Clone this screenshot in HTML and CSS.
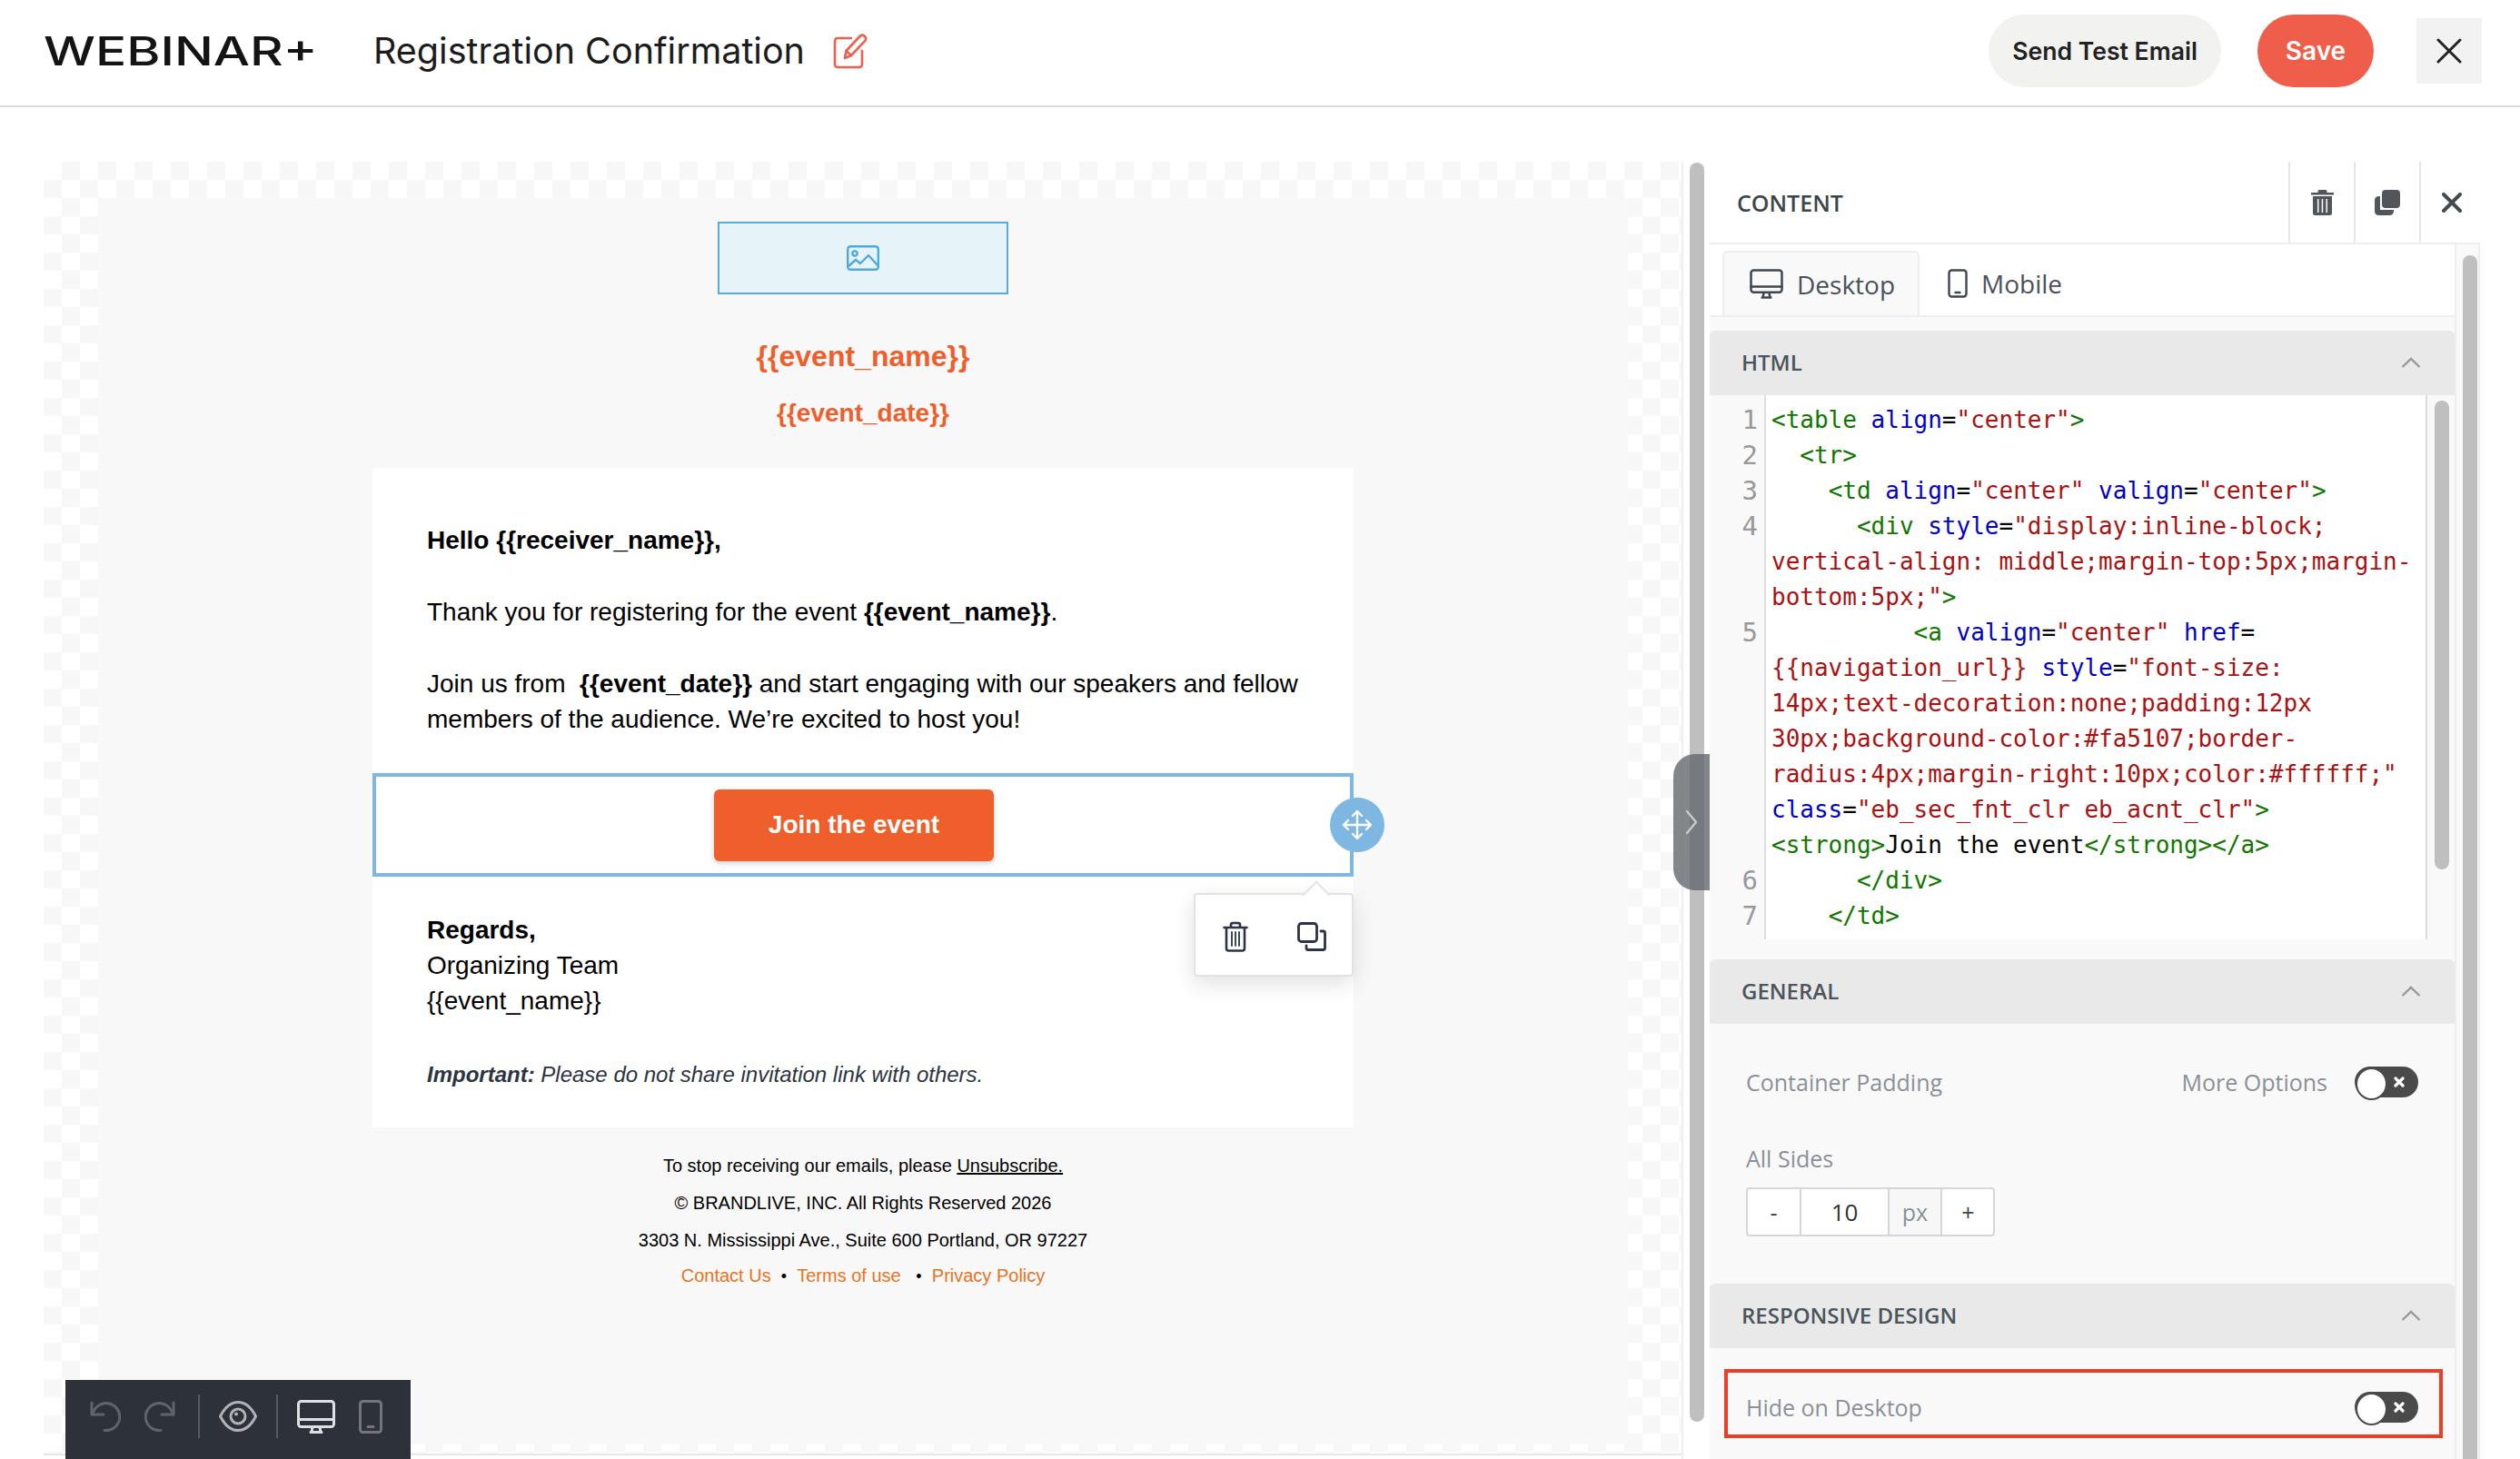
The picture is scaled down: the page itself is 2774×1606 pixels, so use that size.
FILE: index.html
```html
<!DOCTYPE html>
<html lang="en">
<head>
    <meta charset="UTF-8">
    <title>Registration Confirmation</title>
    <link rel="stylesheet" href="styles.css">
</head>
<body>
    <!-- Top bar -->
    <header class="topbar">
        <div class="logo"><span class="logo-text">WEBINAR+</span></div>
        <h1 class="page-title">Registration Confirmation</h1>
        <svg class="edit-icon" viewBox="0 0 38 40" fill="none" stroke="#ee5f4c" stroke-width="2.6" stroke-linejoin="round" stroke-linecap="round">
            <path d="M20 6H5a3 3 0 0 0-3 3v26a3 3 0 0 0 3 3h24a3 3 0 0 0 3-3V20"/>
            <path d="M13 28l1.5-8L30 3.5a3 3 0 0 1 4.300 0l1 1a3 3 0 0 1 0 4.300L20 25z"/>
            <path d="M14.500 20l5.500 5"/>
        </svg>
        <div class="topbar-actions">
            <button class="btn btn-test">Send Test Email</button>
            <button class="btn btn-save">Save</button>
            <button class="btn-close">
                <svg viewBox="0 0 28 28" width="28" height="28" stroke="#222" stroke-width="3" stroke-linecap="round"><path d="M2 2l24 24M26 2L2 26"/></svg>
            </button>
        </div>
    </header>

    <main class="workspace">
        <!-- Email canvas -->
        <section class="canvas">
            <div class="canvas-inner">
                <div class="email">
                    <div class="image-slot">
                        <svg viewBox="0 0 36 28" width="36" height="28" fill="none" stroke="#4fa9dc" stroke-width="2.400" stroke-linejoin="round">
                            <rect x="1.200" y="1.200" width="33.600" height="25.600" rx="3"/>
                            <circle cx="9" cy="9" r="2.600"/>
                            <path d="M2 23l8-7 5 4 9-9 10 11"/>
                        </svg>
                    </div>
                    <div class="event-name">{{event_name}}</div>
                    <div class="event-date">{{event_date}}</div>

                    <div class="card">
                        <p class="card-text"><strong>Hello {{receiver_name}},</strong></p>
                        <p class="card-text">Thank you for registering for the event <strong>{{event_name}}</strong>.</p>
                        <p class="card-text">Join us from&nbsp; <strong>{{event_date}}</strong> and start engaging with our speakers and fellow<br>members of the audience. We’re excited to host you!</p>

                        <div class="button-row">
                            <a class="join-btn">Join the event</a>
                            <span class="move-handle">
                                <svg viewBox="0 0 34 34" width="34" height="34" fill="none" stroke="#fff" stroke-width="2.400" stroke-linecap="round" stroke-linejoin="round">
                                    <path d="M17 2v30M2 17h30M12 7l5-5 5 5M12 27l5 5 5-5M7 12l-5 5 5 5M27 12l5 5-5 5"/>
                                </svg>
                            </span>
                            <div class="row-popup">
                                <svg viewBox="0 0 28 34" width="28" height="34" fill="none" stroke="#2b3445" stroke-width="2.600" stroke-linecap="round" stroke-linejoin="round">
                                    <path d="M1.500 7h25M9 7V4a2 2 0 0 1 2-2h6a2 2 0 0 1 2 2v3M4 7v23a2.500 2.500 0 0 0 2.500 2.500h15A2.500 2.500 0 0 0 24 30V7"/>
                                    <path d="M10 12v15M14 12v15M18 12v15" stroke-width="1.800"/>
                                </svg>
                                <svg viewBox="0 0 32 32" width="32" height="32" fill="none" stroke="#2b3445" stroke-width="2.800" stroke-linecap="round" stroke-linejoin="round">
                                    <rect x="1.500" y="1.500" width="20" height="20" rx="3"/>
                                    <path d="M26 10h2.500a2 2 0 0 1 2 2v16.500a2 2 0 0 1-2 2H12a2 2 0 0 1-2-2V26"/>
                                </svg>
                            </div>
                        </div>

                        <p class="card-text regards"><strong>Regards,</strong><br>Organizing Team<br>{{event_name}}</p>
                        <p class="important"><strong>Important:</strong> Please do not share invitation link with others.</p>
                    </div>

                    <footer class="email-footer">
                        <p class="footer-line">To stop receiving our emails, please <u>Unsubscribe.</u></p>
                        <p class="footer-line">© BRANDLIVE, INC. All Rights Reserved 2026</p>
                        <p class="footer-line">3303 N. Mississippi Ave., Suite 600 Portland, OR 97227</p>
                        <p class="footer-line footer-links"><a>Contact Us</a>&nbsp; <span class="dot">•</span> &nbsp;<a>Terms of use</a>&nbsp; &nbsp;<span class="dot">•</span> &nbsp;<a>Privacy Policy</a></p>
                    </footer>
                </div>
            </div>
        </section>

        <div class="canvas-scroll"><span class="canvas-thumb"></span></div>

        <!-- Settings panel -->
        <aside class="panel">
            <div class="panel-head">
                <span class="panel-title">CONTENT</span>
                <button class="panel-action">
                    <svg viewBox="0 0 25 28" width="25" height="28" fill="#50565b"><path d="M9 0h7a1.500 1.500 0 0 1 1.500 1.500V3H25v2.500H0V3h7.500V1.500A1.500 1.500 0 0 1 9 0z"/><path fill-rule="evenodd" d="M2 7h21v18.500a2.500 2.500 0 0 1-2.500 2.500h-16A2.500 2.500 0 0 1 2 25.500zM7 10v15h1.500V10zM11.700 10v15h1.500V10zM16.500 10v15H18V10z"/></svg>
                </button>
                <button class="panel-action">
                    <svg viewBox="0 0 28 28" width="28" height="28" fill="#50565b"><rect x="8" y="0" width="20" height="20" rx="4"/><path d="M6 7v15h15v1.500a4.500 4.500 0 0 1-4.500 4.500h-12A4.500 4.500 0 0 1 0 23.500v-12A4.500 4.500 0 0 1 4.500 7z"/></svg>
                </button>
                <button class="panel-action">
                    <svg viewBox="0 0 22 22" width="22" height="22" stroke="#444b50" stroke-width="4" stroke-linecap="round"><path d="M2 2l18 18M20 2L2 20"/></svg>
                </button>
            </div>
            <div class="panel-main">
                <div class="panel-body">
                    <div class="tabs">
                        <div class="tab tab-active">
                            <svg viewBox="0 0 38 34" width="37" height="33" fill="none" stroke="#3f474e" stroke-width="2.600" stroke-linejoin="round" stroke-linecap="round"><rect x="1.500" y="1.500" width="35" height="25" rx="3"/><path d="M1.500 20h35M14 32.500h10M16 27l-1 5M22 27l1 5"/></svg>
                            Desktop
                        </div>
                        <div class="tab">
                            <svg viewBox="0 0 22 32" width="22" height="32" fill="none" stroke="#3f474e" stroke-width="2.400" stroke-linejoin="round" stroke-linecap="round"><rect x="1.500" y="1.500" width="19" height="29" rx="3"/><path d="M8.500 26h5"/></svg>
                            Mobile
                        </div>
                    </div>

                    <div class="section-band">HTML<svg class="chevron" viewBox="0 0 22 12"><path d="M1.500 11L11 2l9.500 9"/></svg></div>
                    <div class="editor">
                        <div class="code-line"><span class="ln">1</span><span class="src"><span class="t">&lt;table</span> <span class="a">align</span>=<span class="s">"center"</span><span class="t">&gt;</span></span></div>
                        <div class="code-line"><span class="ln">2</span><span class="src">  <span class="t">&lt;tr&gt;</span></span></div>
                        <div class="code-line"><span class="ln">3</span><span class="src">    <span class="t">&lt;td</span> <span class="a">align</span>=<span class="s">"center"</span> <span class="a">valign</span>=<span class="s">"center"</span><span class="t">&gt;</span></span></div>
                        <div class="code-line"><span class="ln">4</span><span class="src">      <span class="t">&lt;div</span> <span class="a">style</span>=<span class="s">"display:inline-block;</span></span></div>
                        <div class="code-line"><span class="ln"></span><span class="src"><span class="s">vertical-align: middle;margin-top:5px;margin-</span></span></div>
                        <div class="code-line"><span class="ln"></span><span class="src"><span class="s">bottom:5px;"</span><span class="t">&gt;</span></span></div>
                        <div class="code-line"><span class="ln">5</span><span class="src">          <span class="t">&lt;a</span> <span class="a">valign</span>=<span class="s">"center"</span> <span class="a">href</span>=</span></div>
                        <div class="code-line"><span class="ln"></span><span class="src"><span class="s">{{navigation_url}}</span> <span class="a">style</span>=<span class="s">"font-size:</span></span></div>
                        <div class="code-line"><span class="ln"></span><span class="src"><span class="s">14px;text-decoration:none;padding:12px</span></span></div>
                        <div class="code-line"><span class="ln"></span><span class="src"><span class="s">30px;background-color:#fa5107;border-</span></span></div>
                        <div class="code-line"><span class="ln"></span><span class="src"><span class="s">radius:4px;margin-right:10px;color:#ffffff;"</span></span></div>
                        <div class="code-line"><span class="ln"></span><span class="src"><span class="a">class</span>=<span class="s">"eb_sec_fnt_clr eb_acnt_clr"</span><span class="t">&gt;</span></span></div>
                        <div class="code-line"><span class="ln"></span><span class="src"><span class="t">&lt;strong&gt;</span>Join the event<span class="t">&lt;/strong&gt;&lt;/a&gt;</span></span></div>
                        <div class="code-line"><span class="ln">6</span><span class="src">      <span class="t">&lt;/div&gt;</span></span></div>
                        <div class="code-line"><span class="ln">7</span><span class="src">    <span class="t">&lt;/td&gt;</span></span></div>
                        <span class="editor-thumb"></span>
                    </div>

                    <div class="section-band band-general">GENERAL<svg class="chevron" viewBox="0 0 22 12"><path d="M1.500 11L11 2l9.500 9"/></svg></div>
                    <div class="general">
                        <div class="field-row">
                            <span class="field-label">Container Padding</span>
                            <span class="more-options">
                                <span class="field-label">More Options</span>
                                <span class="toggle"><svg viewBox="0 0 12 12" width="12" height="12" stroke="#fff" stroke-width="3.200" stroke-linecap="round"><path d="M2 2l8 8M10 2l-8 8"/></svg></span>
                            </span>
                        </div>
                        <div class="field-label sides-label">All Sides</div>
                        <div class="stepper">
                            <span class="step">-</span>
                            <span class="step-value">10</span>
                            <span class="step-unit">px</span>
                            <span class="step">+</span>
                        </div>
                    </div>

                    <div class="section-band">RESPONSIVE DESIGN<svg class="chevron" viewBox="0 0 22 12"><path d="M1.500 11L11 2l9.500 9"/></svg></div>
                    <div class="hide-box">
                        <span class="field-label">Hide on Desktop</span>
                        <span class="toggle"><svg viewBox="0 0 12 12" width="12" height="12" stroke="#fff" stroke-width="3.200" stroke-linecap="round"><path d="M2 2l8 8M10 2l-8 8"/></svg></span>
                    </div>
                </div>
                <div class="panel-scroll"><span class="panel-thumb"></span></div>
            </div>
        </aside>

        <!-- Items sitting over the canvas -->
        <div class="collapse-handle">
            <svg viewBox="0 0 14 28" width="14" height="28" fill="none" stroke="#c9cbcd" stroke-width="2.400" stroke-linecap="round" stroke-linejoin="round"><path d="M2 2l10 12L2 26"/></svg>
        </div>
        <div class="toolbar">
            <svg class="tool" viewBox="0 0 34 34" width="34" height="34" fill="none" stroke="#5f646c" stroke-width="3" stroke-linecap="round" stroke-linejoin="round"><path d="M2 2v13h13"/><path d="M3 15A15 15 0 1 1 16 32.500"/></svg>
            <svg class="tool tool-redo" viewBox="0 0 34 34" width="34" height="34" fill="none" stroke="#5f646c" stroke-width="3" stroke-linecap="round" stroke-linejoin="round"><path d="M32 2v13H19"/><path d="M31 15A15 15 0 1 0 18 32.500"/></svg>
            <span class="tool-sep"></span>
            <svg class="tool" viewBox="0 0 42 34" width="42" height="34" fill="none" stroke="#b0b2b5" stroke-width="3" stroke-linejoin="round"><path d="M1.500 17C7 6 14 1.500 21 1.500S35 6 40.500 17C35 28 28 32.500 21 32.500S7 28 1.500 17z"/><circle cx="21" cy="17" r="8"/><circle cx="19" cy="14.500" r="2" fill="#b0b2b5" stroke="none"/></svg>
            <span class="tool-sep"></span>
            <svg class="tool" viewBox="0 0 42 37" width="42" height="37" fill="none" stroke="#dfe0e1" stroke-width="3" stroke-linejoin="round" stroke-linecap="round"><rect x="1.500" y="1.500" width="39" height="28" rx="3"/><path d="M1.500 21.500h39M15 35.500h12M17 30l-1 5M25 30l1 5"/></svg>
            <svg class="tool" viewBox="0 0 26 37" width="26" height="37" fill="none" stroke="#72757c" stroke-width="3" stroke-linejoin="round" stroke-linecap="round"><rect x="1.500" y="1.500" width="23" height="34" rx="3"/><path d="M10 29.500h6"/></svg>
        </div>
    </main>
</body>
</html>
```

FILE: styles.css
```css
/* General styles */
* {
    box-sizing: border-box;
}

html, body {
    height: 100%;
}

body {
    margin: 0;
    display: flex;
    flex-direction: column;
    background-color: #fff;
    font-family: "Liberation Sans", Arial, sans-serif;
    color: #000;
    overflow: hidden;
}

button {
    border: none;
    font: inherit;
    cursor: pointer;
}

/* Top bar */
.topbar {
    display: flex;
    align-items: center;
    flex: none;
    height: 118px;
    padding: 0 42px 4px 48px;
    border-bottom: 2px solid #dcdcdc;
}

.logo {
    width: 297px;
    margin-right: 66px;
}

.logo-text {
    display: inline-block;
    font-family: Inter, sans-serif;
    font-size: 44px;
    line-height: 44px;
    font-weight: 500;
    color: #141414;
    transform: scaleX(1.29);
    transform-origin: left center;
}

.page-title {
    margin: 0 31px 0 0;
    font-family: Inter, sans-serif;
    font-size: 39.5px;
    font-weight: 400;
    color: #1c1c1c;
}

.edit-icon {
    width: 38px;
    height: 40px;
}

.topbar-actions {
    display: flex;
    align-items: center;
    margin-left: auto;
}

.btn {
    height: 80px;
    border-radius: 40px;
    font-family: Inter, sans-serif;
    font-size: 28px;
    font-weight: 600;
}

.btn-test {
    width: 256px;
    margin-right: 40px;
    background-color: #f2f2f1;
    font-size: 26.6px;
    color: #222;
}

.btn-save {
    width: 128px;
    margin-right: 47px;
    background-color: #ef5e4b;
    color: #fff;
}

.btn-close {
    display: flex;
    align-items: center;
    justify-content: center;
    width: 72px;
    height: 72px;
    background-color: #f2f2f2;
}

/* Workspace */
.workspace {
    position: relative;
    display: flex;
    flex: 1;
    min-height: 0;
    padding: 60px 44px 0 48px;
}

.canvas {
    flex: none;
    width: 1803px;
    height: 1424px;
    padding: 40px 59px 10px 60px;
    border-bottom: 2px solid #e8e8e8;
    background-color: #fff;
    background-image: conic-gradient(#f7f7f7 25%, #fff 0 50%, #f7f7f7 0 75%, #fff 0);
    background-size: 40px 40px;
}

.canvas-inner {
    height: 100%;
    background-color: #f8f8f8;
}

.email {
    width: 1080px;
    margin: 0 auto;
    padding-top: 26px;
}

.image-slot {
    display: flex;
    align-items: center;
    justify-content: center;
    width: 320px;
    height: 80px;
    margin: 0 auto;
    border: 2px solid #5aabdc;
    background-color: #e6f3f9;
}

.event-name {
    margin-top: 48px;
    font-size: 32px;
    line-height: 40px;
    font-weight: bold;
    text-align: center;
    color: #ee5f2c;
}

.event-date {
    margin-top: 25px;
    font-size: 28px;
    line-height: 36px;
    font-weight: bold;
    text-align: center;
    color: #ee5f2c;
}

.card {
    margin-top: 42px;
    padding-top: 60px;
    height: 726px;
    background-color: #fff;
}

.card-text {
    margin: 0 0 40px;
    padding: 0 60px;
    font-size: 28px;
    line-height: 39px;
}

.button-row {
    position: relative;
    display: flex;
    align-items: center;
    justify-content: center;
    height: 114px;
    margin: 40px 0 39px;
    padding-right: 20px;
    border: 4px solid #7eb8e2;
}

.join-btn {
    display: flex;
    align-items: center;
    justify-content: center;
    width: 308px;
    height: 79px;
    border-radius: 6px;
    background-color: #ee5f2c;
    box-shadow: 0 2px 6px rgba(0, 0, 0, 0.2);
    font-size: 28px;
    font-weight: bold;
    color: #fff;
}

.move-handle {
    position: absolute;
    top: 23px;
    right: -38px;
    display: flex;
    align-items: center;
    justify-content: center;
    width: 60px;
    height: 60px;
    border-radius: 50%;
    background-color: #7eb8e2;
}

.row-popup {
    position: absolute;
    top: 128px;
    right: -4px;
    display: flex;
    align-items: center;
    justify-content: space-between;
    width: 176px;
    height: 92px;
    padding: 3px 28px 0 30px;
    border: 2px solid #e2e2e2;
    border-radius: 4px;
    background-color: #fff;
    box-shadow: 0 8px 24px rgba(0, 0, 0, 0.12);
}

.row-popup::before {
    content: "";
    position: absolute;
    top: -11px;
    right: 28px;
    width: 20px;
    height: 20px;
    border-top: 2px solid #e2e2e2;
    border-left: 2px solid #e2e2e2;
    background-color: #fff;
    transform: rotate(45deg);
}

.regards {
    margin-bottom: 44px;
}

.important {
    margin: 0;
    padding: 0 60px;
    font-size: 24px;
    line-height: 36px;
    font-style: italic;
    color: #2b3440;
}

.email-footer {
    padding-top: 29px;
    text-align: center;
    font-size: 20px;
}

.footer-line {
    margin: 0 0 15px;
    line-height: 26px;
}

.footer-links {
    margin-top: -2px;
}

.footer-links a {
    color: #e8731e;
}

.dot {
    font-size: 18px;
}

/* Canvas scrollbar */
.canvas-scroll {
    flex: none;
    width: 31px;
    padding: 1px 0 0 7px;
    border-left: 2px solid #eee;
}

.canvas-thumb {
    display: block;
    width: 16px;
    height: 1386px;
    border-radius: 8px;
    background-color: #bfbfbf;
}

/* Settings panel */
.panel {
    flex: none;
    width: 848px;
    overflow: hidden;
    background-color: #f9f9f9;
}

.panel-head {
    display: flex;
    align-items: center;
    height: 91px;
    padding-left: 30px;
    border-bottom: 2px solid #eee;
    background-color: #fff;
}

.panel-title {
    flex: 1;
    font-family: "Open Sans", sans-serif;
    font-size: 25px;
    font-weight: 600;
    color: #3d454c;
}

.panel-action {
    display: flex;
    align-items: center;
    justify-content: center;
    width: 72px;
    height: 100%;
    padding: 0;
    background: none;
    border-left: 2px solid #e6e6e6;
}

.panel-action:last-child {
    width: 67px;
    padding-left: 2px;
}

.panel-main {
    display: flex;
}

.panel-body {
    width: 820px;
    flex: none;
}

.tabs {
    display: flex;
    height: 80px;
    padding: 7px 0 0 14px;
    border-bottom: 2px solid #eee;
    background-color: #fff;
}

.tab {
    display: flex;
    align-items: center;
    gap: 15px;
    padding: 0 31px;
    font-family: "Open Sans", sans-serif;
    font-size: 28px;
    color: #4a5058;
}

.tab-active {
    width: 217px;
    padding-left: 28px;
    padding-right: 0;
    border: 2px solid #eee;
    border-bottom: none;
    border-radius: 6px 6px 0 0;
    background-color: #f9f9f9;
}

.section-band {
    display: flex;
    align-items: center;
    justify-content: space-between;
    height: 71px;
    margin-top: 15px;
    padding: 0 37px 2px 35px;
    border-radius: 6px 6px 0 0;
    background-color: #e9e9e9;
    font-family: "Open Sans", sans-serif;
    font-size: 24px;
    font-weight: 600;
    color: #4b555c;
}

.chevron {
    width: 22px;
    height: 12px;
    fill: none;
    stroke: #999;
    stroke-width: 2.4;
}

/* Code editor */
.editor {
    position: relative;
    height: 599px;
    padding-top: 8px;
    overflow: hidden;
    background-color: #fff;
    font-family: "DejaVu Sans Mono", monospace;
    font-size: 26px;
    line-height: 39px;
    color: #000;
}

.code-line {
    display: flex;
    height: 39px;
}

.ln {
    flex: none;
    width: 60px;
    height: 39px;
    padding-right: 7px;
    font-size: 29px;
    text-align: right;
    color: #999;
}

.src {
    padding-left: 8px;
    white-space: pre;
}

.t { color: #170; }
.a { color: #00c; }
.s { color: #a11; }

/* Gutter strip and scrollbar strip sit behind the code lines */
.editor::before {
    content: "";
    position: absolute;
    top: 0;
    left: 0;
    bottom: 0;
    z-index: -1;
    width: 60px;
    border-right: 2px solid #ddd;
    background-color: #f9f9f9;
}

.editor {
    z-index: 0;
}

.editor::after {
    content: "";
    position: absolute;
    top: 0;
    right: 0;
    bottom: 0;
    width: 30px;
    border-left: 2px solid #ddd;
    background-color: #f9f9f9;
}

.editor-thumb {
    position: absolute;
    top: 6px;
    right: 6px;
    z-index: 1;
    width: 16px;
    height: 516px;
    border-radius: 8px;
    background-color: #bfbfbf;
}

.band-general {
    margin-top: 22px;
}

.general {
    height: 271px;
    padding: 47px 40px 0 40px;
}

.field-row {
    display: flex;
    align-items: center;
    justify-content: space-between;
    height: 34px;
}

.field-label {
    font-family: "Open Sans", sans-serif;
    font-size: 25px;
    color: #8a9096;
}

.more-options {
    display: flex;
    align-items: center;
    gap: 30px;
}

.toggle {
    position: relative;
    display: flex;
    align-items: center;
    justify-content: flex-end;
    width: 70px;
    height: 34px;
    padding-right: 15px;
    border-radius: 17px;
    background-color: #4a4a4a;
}

.toggle::before {
    content: "";
    position: absolute;
    top: 1px;
    left: 1px;
    width: 31px;
    height: 32px;
    border-radius: 50%;
    border: 2px solid #4a4a4a;
    background-color: #fff;
}

.sides-label {
    margin-top: 50px;
    line-height: 34px;
}

.stepper {
    display: flex;
    width: 274px;
    height: 54px;
    margin-top: 15px;
    border: 2px solid #d3d7db;
    border-radius: 4px;
    background-color: #fff;
    font-family: "Open Sans", sans-serif;
    line-height: 50px;
    text-align: center;
}

.step {
    flex: none;
    width: 57px;
    font-size: 25px;
    color: #444;
}

.step-value {
    flex: none;
    width: 99px;
    border-left: 2px solid #d3d7db;
    border-right: 2px solid #d3d7db;
    font-size: 26px;
    color: #333;
}

.step-unit {
    flex: none;
    width: 58px;
    border-right: 2px solid #d3d7db;
    background-color: #f7f7f7;
    font-size: 25px;
    color: #8a9096;
}

.hide-box {
    display: flex;
    align-items: center;
    justify-content: space-between;
    height: 76px;
    margin: 23px 13px 0 16px;
    padding: 8px 23px 0 20px;
    border: 4px solid #ea3f24;
}

.panel-scroll {
    flex: 1;
    padding: 12px 0 0 7px;
    border-left: 2px solid #eee;
    border-right: 2px solid #eee;
}

.panel-thumb {
    display: block;
    width: 16px;
    height: 1400px;
    border-radius: 8px;
    background-color: #bfbfbf;
}

/* Collapse handle over the canvas edge */
.collapse-handle {
    position: absolute;
    top: 712px;
    left: 1842px;
    display: flex;
    align-items: center;
    justify-content: center;
    width: 40px;
    height: 150px;
    border-radius: 24px 0 0 24px;
    background-color: rgba(100, 105, 110, 0.8);
}

/* Floating toolbar */
.toolbar {
    position: absolute;
    top: 1401px;
    left: 72px;
    display: flex;
    align-items: center;
    width: 380px;
    height: 87px;
    padding: 0 0 7px 27px;
    background-color: #2c313a;
}

.tool {
    flex: none;
}

.tool + .tool {
    margin-left: 26px;
}

.tool-redo {
    margin-right: 4px;
}

.tool-sep {
    width: 2px;
    height: 48px;
    margin: 0 21px;
    background-color: #565a61;
}
```
